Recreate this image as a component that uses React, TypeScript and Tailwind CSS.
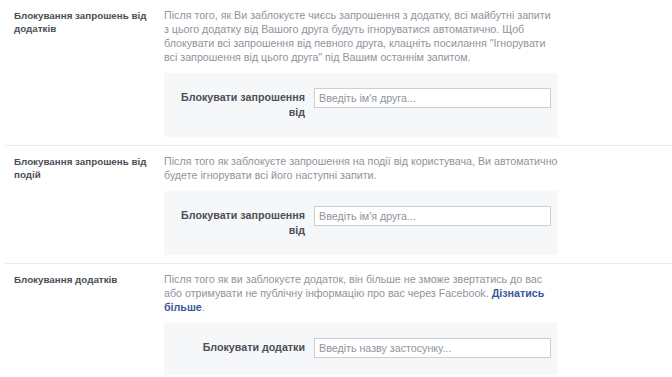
import React from "react";

type Section = {
  title: React.ReactNode;
  lines: React.ReactNode[];
  label: React.ReactNode;
  placeholder: string;
};

const sections: Section[] = [
  {
    title: (
      <>
        Блокування запрошень від
        <br />
        додатків
      </>
    ),
    lines: [
      "Після того, як Ви заблокуєте чиєсь запрошення з додатку, всі майбутні запити",
      "з цього додатку від Вашого друга будуть ігноруватися автоматично. Щоб",
      "блокувати всі запрошення від певного друга, клацніть посилання \"Ігнорувати",
      "всі запрошення від цього друга\" під Вашим останнім запитом.",
    ],
    label: (
      <>
        Блокувати запрошення
        <br />
        від
      </>
    ),
    placeholder: "Введіть ім'я друга...",
  },
  {
    title: (
      <>
        Блокування запрошень від
        <br />
        подій
      </>
    ),
    lines: [
      "Після того як заблокуєте запрошення на події від користувача, Ви автоматично",
      "будете ігнорувати всі його наступні запити.",
    ],
    label: (
      <>
        Блокувати запрошення
        <br />
        від
      </>
    ),
    placeholder: "Введіть ім'я друга...",
  },
  {
    title: "Блокування додатків",
    lines: [
      "Після того як ви заблокуєте додаток, він більше не зможе звертатись до вас",
      <>
        або отримувати не публічну інформацію про вас через Facebook.{" "}
        <span className="font-bold text-[#365899]">Дізнатись</span>
      </>,
      <>
        <span className="font-bold text-[#365899]">більше</span>.
      </>,
    ],
    label: "Блокувати додатки",
    placeholder: "Введіть назву застосунку...",
  },
];

export default function App() {
  return (
    <div className="h-[377px] w-[672px] overflow-hidden bg-white font-['Liberation_Sans',Arial,sans-serif]">
      {sections.map((section, i) => (
        <div
          key={i}
          className="ml-[5px] flex border-b border-[#e9ebee] pb-2 pt-2"
        >
          <div className="w-[159px] shrink-0 whitespace-nowrap pl-[9px] pr-2 pt-[1px] text-[9.8px] font-bold leading-[13px] text-[#4b4f56]">
            {section.title}
          </div>

          <div className="w-[393px] shrink-0">
            <div className="whitespace-nowrap text-[10.7px] leading-[14px] text-[#90949c]">
              {section.lines.map((line, j) => (
                <div key={j}>{line}</div>
              ))}
            </div>

            <div className="mt-[9px] flex items-start bg-[#f6f7f9] pb-[17px] pr-[6px] pt-[15px]">
              <div className="mt-[2px] w-[141px] shrink-0 text-right text-[10.7px] font-bold leading-[15px] text-[#4b4f56]">
                {section.label}
              </div>
              <input
                type="text"
                title="search"
                placeholder={section.placeholder}
                className="ml-[9px] h-[20px] w-[237px] border border-[#ccd0d5] bg-white px-[4px] text-[10.7px] text-[#1d2129] outline-none placeholder:text-[#90949c]"
              />
            </div>
          </div>
        </div>
      ))}
    </div>
  );
}
